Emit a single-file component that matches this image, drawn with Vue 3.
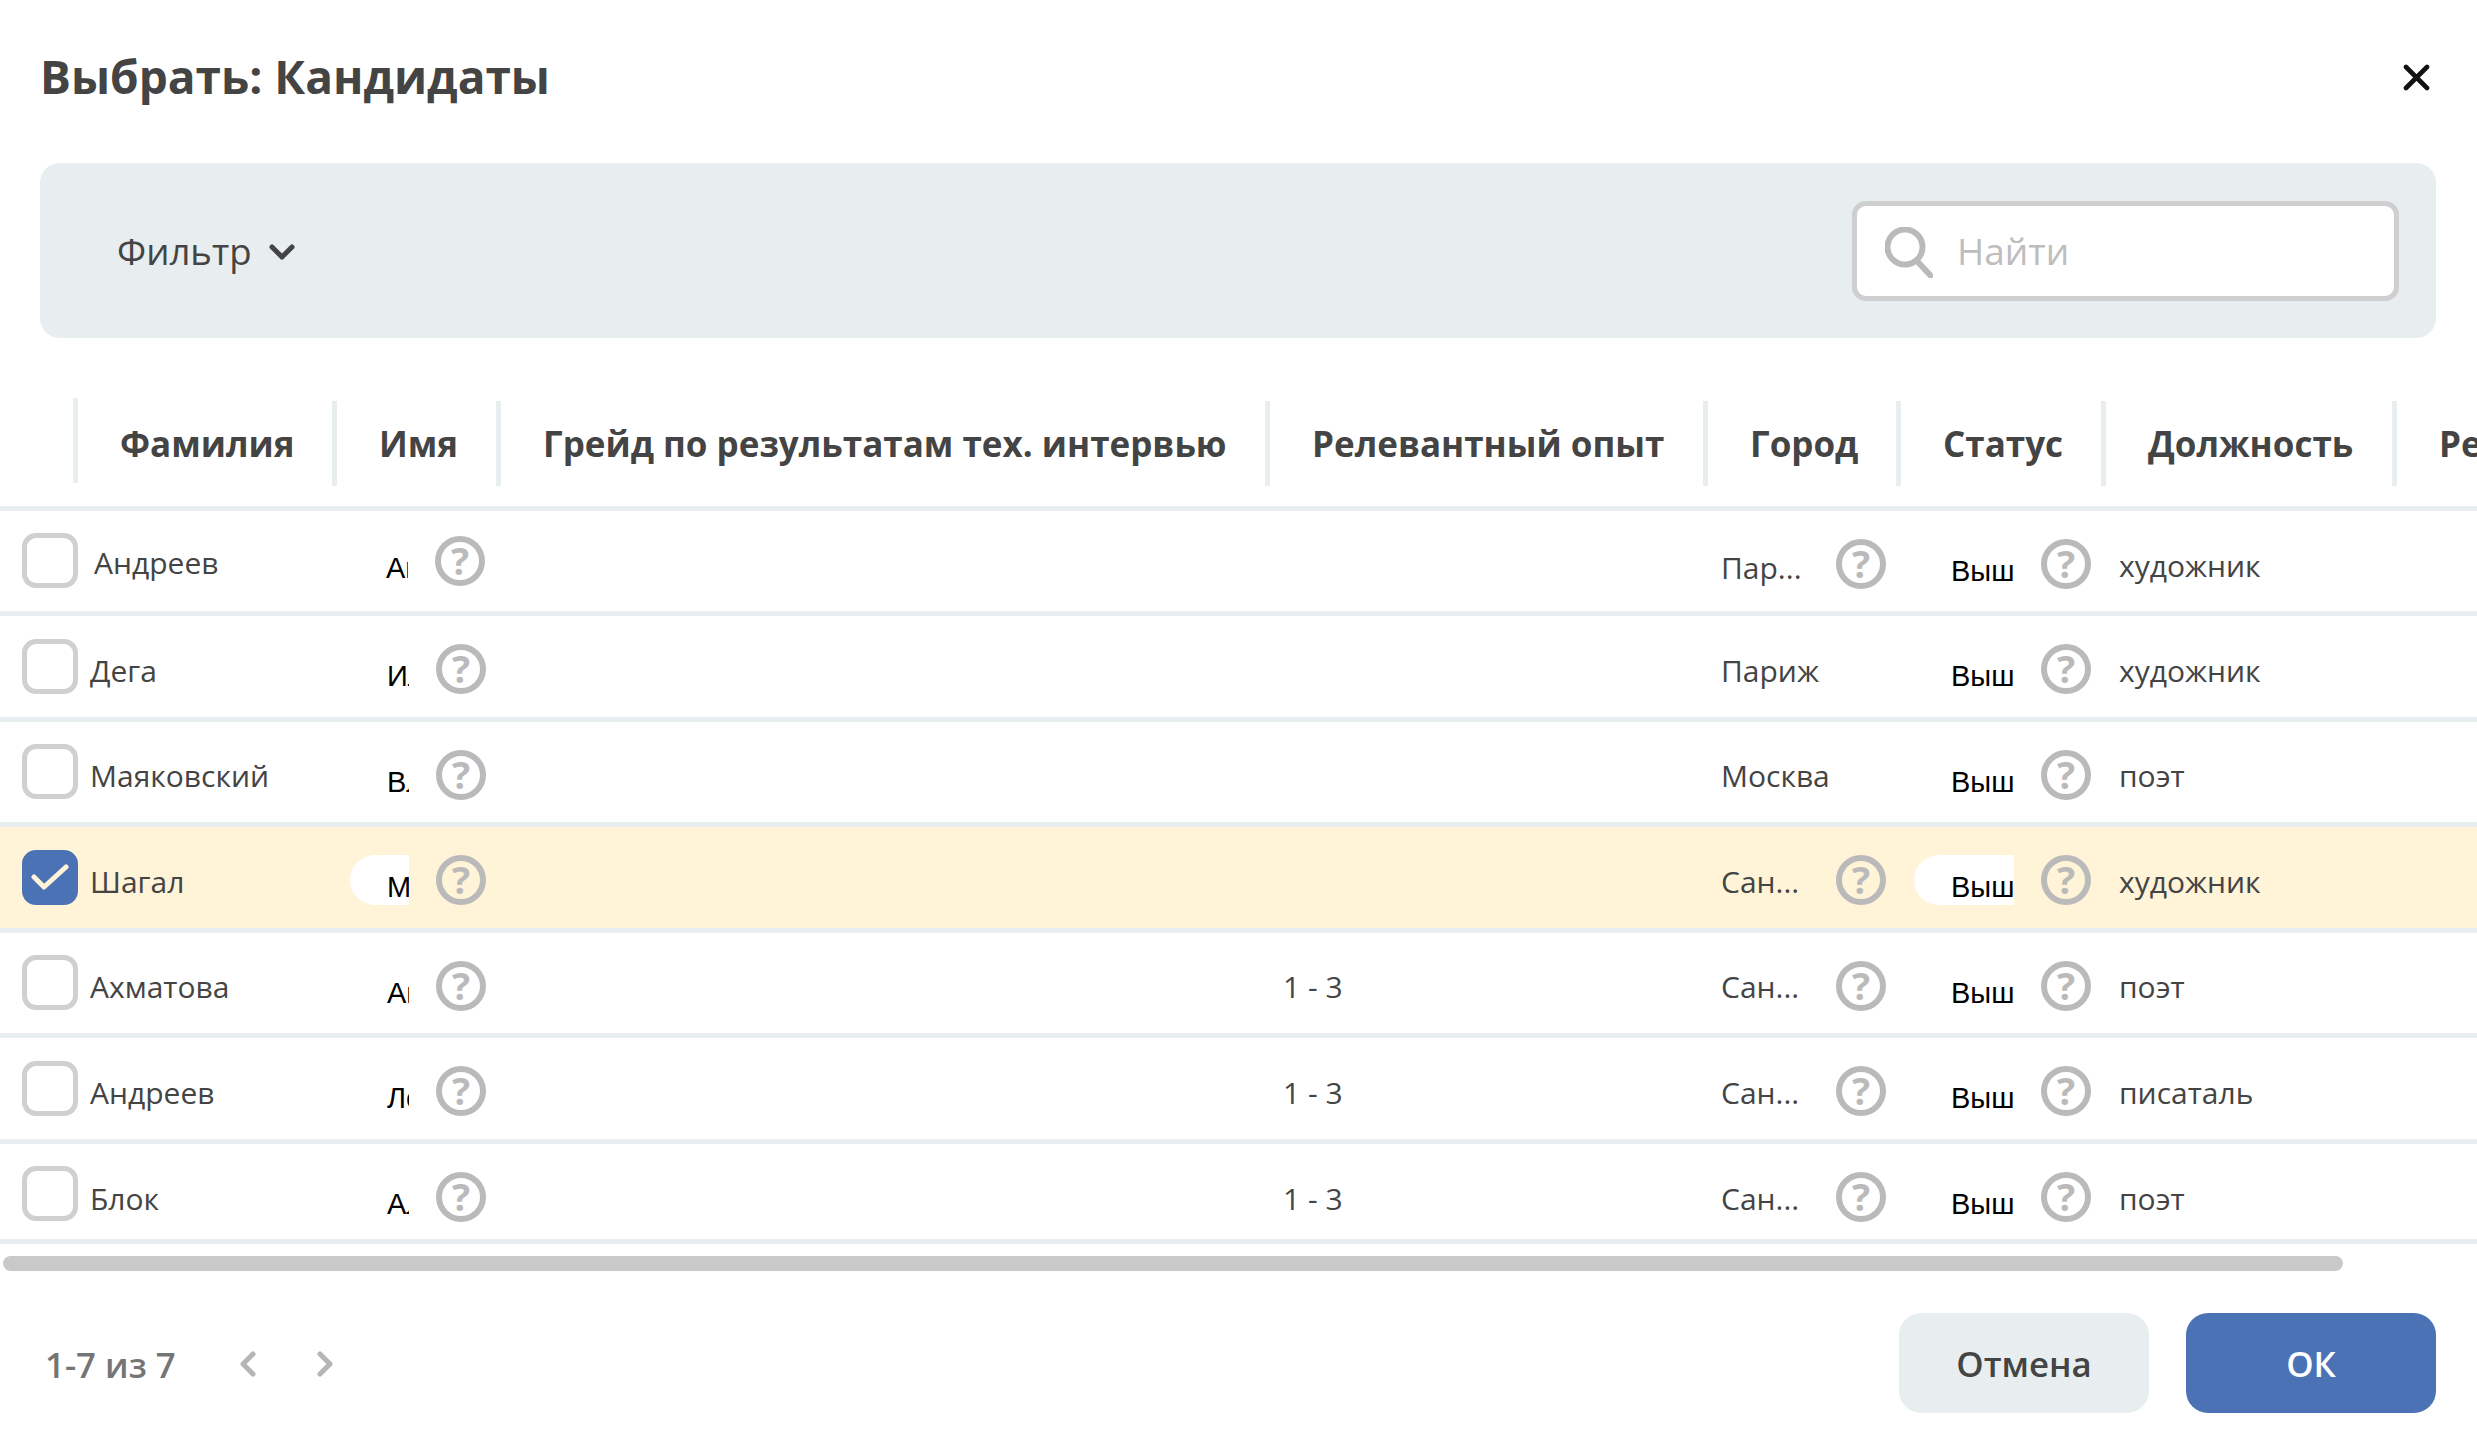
<script setup>
const rows = [
  { last: 'Андреев', first: 'Андрей', exp: '', city: 'Париж', cityShort: 'Пар...', pos: 'художник', shift: true },
  { last: 'Дега', first: 'Илер', exp: '', city: 'Париж', pos: 'художник' },
  { last: 'Маяковский', first: 'Владимир', exp: '', city: 'Москва', pos: 'поэт' },
  { last: 'Шагал', first: 'Марк', exp: '', city: 'Санкт', cityShort: 'Сан...', pos: 'художник', selected: true },
  { last: 'Ахматова', first: 'Анна', exp: '1 - 3', city: 'Санкт', cityShort: 'Сан...', pos: 'поэт' },
  { last: 'Андреев', first: 'Леонид', exp: '1 - 3', city: 'Санкт', cityShort: 'Сан...', pos: 'писаталь' },
  { last: 'Блок', first: 'Александр', exp: '1 - 3', city: 'Санкт', cityShort: 'Сан...', pos: 'поэт', end: true }
]
const columns = ['Фамилия', 'Имя', 'Грейд по результатам тех. интервью', 'Релевантный опыт', 'Город', 'Статус', 'Должность', 'Рейтинг']
</script>

<template>
  <div class="dialog">
    <header class="top">
      <h1 class="title">Выбрать: Кандидаты</h1>
      <svg class="close" viewBox="0 0 27 27" width="27" height="27"><path d="M3 3 24 24M24 3 3 24" stroke="#111" stroke-width="4.6" stroke-linecap="round" fill="none"/></svg>
    </header>

    <section class="panel">
      <div class="filter">
        <span>Фильтр</span>
        <svg viewBox="0 0 26 16" width="26" height="16"><path d="M3 3 13 13 23 3" stroke="#444" stroke-width="5" stroke-linecap="round" stroke-linejoin="round" fill="none"/></svg>
      </div>
      <div class="search">
        <svg viewBox="0 0 48 51" width="48" height="51"><circle cx="20" cy="20" r="17.5" stroke="#bababa" stroke-width="6" fill="none"/><path d="M32 34 45.500 48.500" stroke="#bababa" stroke-width="6" stroke-linecap="round" fill="none"/></svg>
        <span>Найти</span>
      </div>
    </section>

    <div class="table">
      <div class="grid head">
        <div class="hcell gutter"></div>
        <div v-for="c in columns" :key="c" class="hcell"><span>{{ c }}</span></div>
      </div>
      <div
        v-for="r in rows"
        :key="r.last + r.first"
        class="grid row"
        :class="{ selected: r.selected, shift: r.shift, end: r.end }"
      >
        <div class="cell check-cell">
          <span class="check" :class="{ on: r.selected }">
            <svg v-if="r.selected" viewBox="0 0 38 28" width="38" height="28"><path d="M3 14 13 24 35 4" stroke="#fff3d8" stroke-width="5" stroke-linecap="round" stroke-linejoin="round" fill="none"/></svg>
          </span>
        </div>
        <div class="cell text lastname">{{ r.last }}</div>
        <div class="cell pick name">
          <span class="pill"><span>{{ r.first }}</span></span>
          <svg class="help" viewBox="0 0 50 50" width="50" height="50"><circle cx="25" cy="25" r="22" stroke="#bababa" stroke-width="6" fill="none"/><text x="25" y="38.500" text-anchor="middle">?</text></svg>
        </div>
        <div class="cell"></div>
        <div class="cell text exp">{{ r.exp }}</div>
        <div class="cell city">
          <span class="city-text">{{ r.cityShort || r.city }}</span>
          <svg v-if="r.cityShort" class="help" viewBox="0 0 50 50" width="50" height="50"><circle cx="25" cy="25" r="22" stroke="#bababa" stroke-width="6" fill="none"/><text x="25" y="38.500" text-anchor="middle">?</text></svg>
        </div>
        <div class="cell pick status">
          <span class="pill"><span>Выше среднего</span></span>
          <svg class="help" viewBox="0 0 50 50" width="50" height="50"><circle cx="25" cy="25" r="22" stroke="#bababa" stroke-width="6" fill="none"/><text x="25" y="38.500" text-anchor="middle">?</text></svg>
        </div>
        <div class="cell text pos">{{ r.pos }}</div>
        <div class="cell"></div>
      </div>
      <div class="scroll"><div class="thumb"></div></div>
    </div>

    <footer class="foot">
      <div class="pager">
        <span class="count">1-7 из 7</span>
        <svg viewBox="0 0 18 26" width="18" height="26"><path d="M14 3 4 13 14 23" stroke="#b5b5b5" stroke-width="5" stroke-linecap="round" stroke-linejoin="round" fill="none"/></svg>
        <svg viewBox="0 0 18 26" width="18" height="26"><path d="M4 3 14 13 4 23" stroke="#b5b5b5" stroke-width="5" stroke-linecap="round" stroke-linejoin="round" fill="none"/></svg>
      </div>
      <div class="actions">
        <button class="btn cancel">Отмена</button>
        <button class="btn ok">ОК</button>
      </div>
    </footer>
  </div>
</template>

<style>
html, body { margin: 0; background: #fff; overflow: hidden; }
</style>

<style scoped>
.dialog {
  width: 2477px;
  height: 1445px;
  overflow: hidden;
  font-family: "Open Sans", "Noto Sans", sans-serif;
  color: #444;
  box-sizing: border-box;
}
.top {
  height: 163px;
  display: flex;
  justify-content: space-between;
  padding: 0 47px 0 40px;
  box-sizing: border-box;
}
.title {
  margin: 45px 0 0;
  font-size: 46px;
  line-height: 62px;
  font-weight: 700;
  color: #444;
}
.close { margin-top: 64px; }
.panel {
  margin: 0 41px 0 40px;
  height: 175px;
  border-radius: 20px;
  background: #e8edf0;
  display: flex;
  align-items: center;
  justify-content: space-between;
  padding: 0 37px 0 77px;
}
.filter {
  display: flex;
  align-items: center;
  gap: 17px;
  font-size: 36.6px;
  line-height: 50px;
}
.filter svg { margin-top: 2px; }
.search {
  width: 547px;
  height: 100px;
  box-sizing: border-box;
  border: 5px solid #cfcfcf;
  border-radius: 14px;
  background: #fff;
  display: flex;
  align-items: center;
  gap: 24px;
  padding: 0 0 0 28px;
  font-size: 37px;
  color: #bdbdbd;
}
.search svg { margin-top: 3px; }
.table { margin-top: 60px; }
.grid {
  display: grid;
  grid-template-columns: 78px 259px 164px 769px 438px 193px 205px 291px 80px;
  width: 2477px;
  overflow: hidden;
}
.head {
  height: 113px;
  box-sizing: border-box;
  border-bottom: 5px solid #e8edf0;
  align-items: start;
  padding-top: 3px;
}
.hcell {
  height: 85px;
  box-sizing: border-box;
  border-right: 5px solid #e8edf0;
  display: flex;
  align-items: center;
  padding-left: 42px;
  font-size: 35px;
  font-weight: 700;
  white-space: nowrap;
}
.hcell.gutter { margin-top: -3px; padding: 0; }
.hcell:last-child { border: 0; }
.row {
  height: 105.45px;
  box-sizing: border-box;
  border-bottom: 5px solid #e8edf0;
  align-items: start;
}
.row.end { height: 100.3px; }
.row.selected { background: #fff3d8; }
.cell {
  height: 100px;
  box-sizing: border-box;
  padding-top: 6px;
  min-width: 0;
  display: flex;
  align-items: center;
  font-size: 30px;
  font-weight: 400;
  white-space: nowrap;
}
.cell.text { padding-top: 8px; }
.city-text { padding-top: 2px; }
.end .cell.text { padding-top: 10px; }
.end .city-text { padding-top: 4px; }
.check-cell { padding: 22.4px 0 0 22px; align-items: flex-start; }
.check {
  width: 56px;
  height: 55px;
  box-sizing: border-box;
  border: 5px solid #d0d0d0;
  border-radius: 14px;
  display: flex;
  align-items: center;
  justify-content: center;
}
.check.on { background: #4c72b6; border-color: #4c72b6; }
.lastname { padding-left: 12px; }
.shift .cell.lastname { padding: 3px 0 0 16px; }
.pick { margin-left: 13px; gap: 27px; }
.shift .name { margin-left: 12px; padding-top: 0; }
.shift .city-text { padding-top: 6px; }
.shift .cell.pos { padding-top: 9px; }
.pill {
  width: 59px;
  height: 50px;
  flex: none;
  overflow: hidden;
  border-radius: 25px 0 0 25px;
  padding-left: 37px;
  box-sizing: border-box;
  font-family: "Liberation Sans", sans-serif;
  font-size: 29px;
  line-height: 64px;
  color: #000;
}
.selected .pill { background: #fff; }
.help text {
  font-family: "Open Sans", sans-serif;
  font-size: 38px;
  font-weight: 700;
  fill: #bababa;
}
.exp { padding-left: 13px; }
.city { padding-left: 13px; justify-content: space-between; padding-right: 15px; }
.status { margin-left: 13px; }
.status .pill { width: 100px; padding-left: 37px; }
.pos { padding-left: 13px; }
.scroll { height: 28.3px; padding-top: 12.5px; box-sizing: border-box; }
.thumb { width: 2340px; height: 15px; margin-left: 3px; border-radius: 8px; background: #c9c9c9; }
.foot {
  margin-top: 41px;
  display: flex;
  justify-content: space-between;
  align-items: center;
  padding: 0 41px 0 45px;
}
.pager { display: flex; align-items: center; }
.count { font-size: 34.8px; font-weight: 600; color: #757575; width: 194px; padding-top: 2px; }
.pager svg { margin-top: 2px; }
.pager svg + svg { margin-left: 59px; }
.actions { display: flex; gap: 37px; }
.btn {
  width: 250px;
  height: 100px;
  border: 0;
  border-radius: 22px;
  font-family: inherit;
  font-size: 34.8px;
  font-weight: 600;
}
.cancel { background: #e8edf0; color: #444; }
.ok { background: #4c72b6; color: #fff; }
</style>
